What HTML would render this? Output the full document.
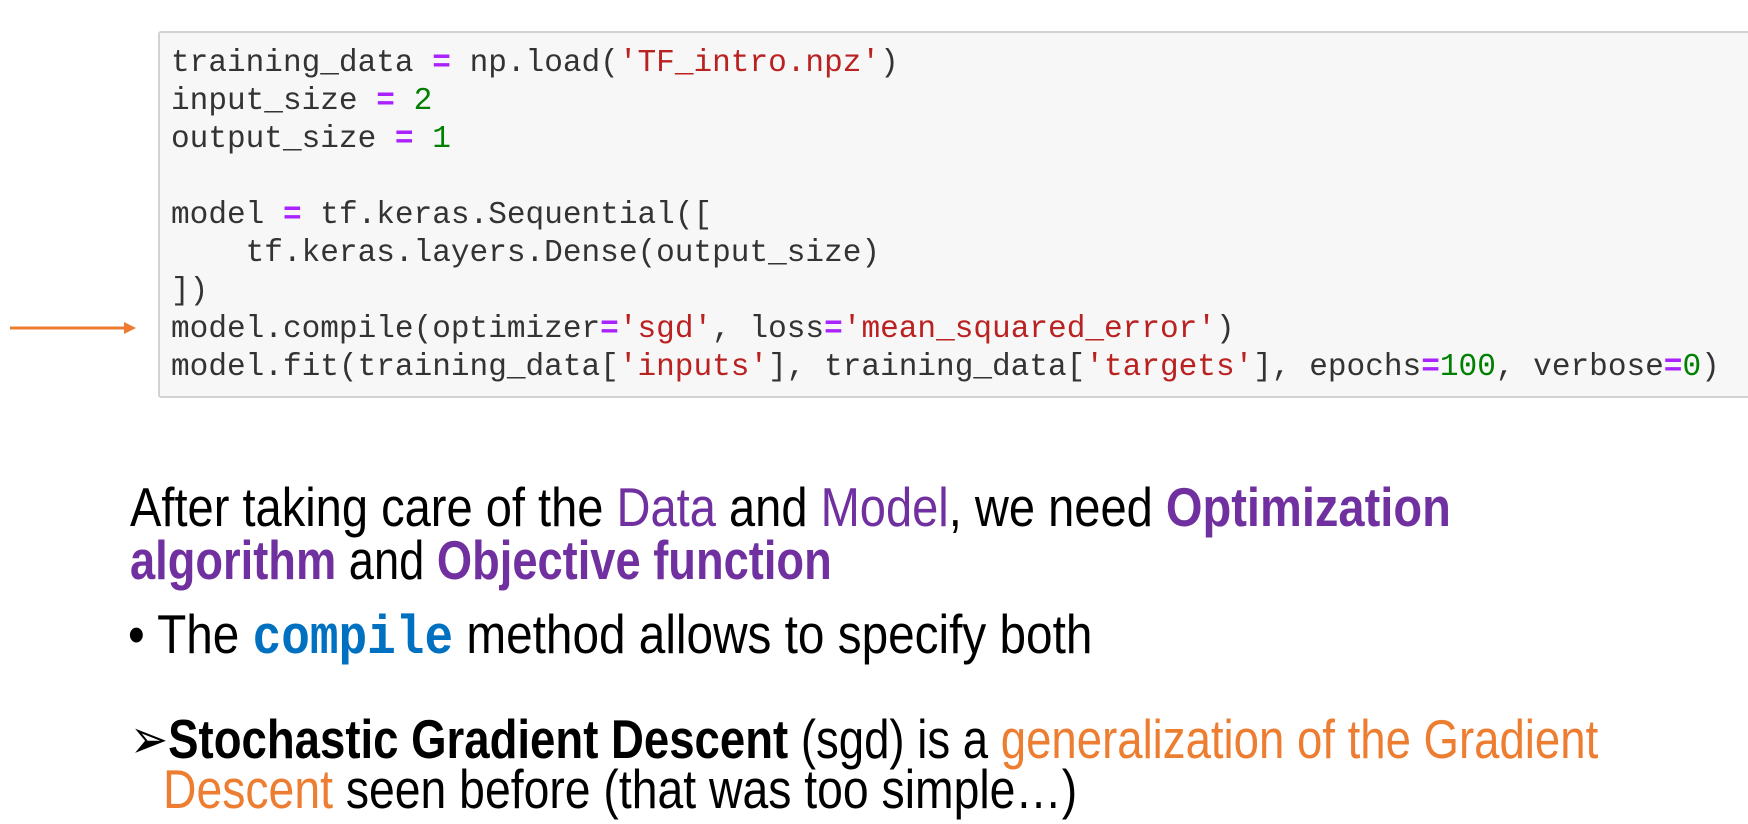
<!DOCTYPE html>
<html><head><meta charset="utf-8"><style>
html,body{margin:0;padding:0;background:#fff;width:1748px;height:824px;overflow:hidden;position:relative}
.box{position:absolute;left:158px;top:31px;width:1600px;height:367px;background:#f7f7f7;border:2px solid #d2d2d2;border-radius:3px;box-sizing:border-box}
.code{position:absolute;left:171px;top:45px;font-family:"Liberation Mono",monospace;font-size:31.1px;line-height:38px;color:#333;white-space:pre}
.o{color:#aa22ff;font-weight:bold}.s{color:#ba2121}.n{color:#008000}
.t{position:absolute;font-family:"Liberation Sans",sans-serif;font-size:55px;line-height:54px;white-space:nowrap;transform-origin:0 0;color:#000}
.p{color:#7030a0}.b{font-weight:bold}.or{color:#ed7d31}
.cm{color:#0070c0;font-family:"Liberation Mono",monospace;font-weight:bold}
</style></head><body>
<div class="box"></div>
<div class="code">training_data <span class="o">=</span> np.load(<span class="s">'TF_intro.npz'</span>)
input_size <span class="o">=</span> <span class="n">2</span>
output_size <span class="o">=</span> <span class="n">1</span>

model <span class="o">=</span> tf.keras.Sequential([
    tf.keras.layers.Dense(output_size)
])
model.compile(optimizer<span class="o">=</span><span class="s">'sgd'</span>, loss<span class="o">=</span><span class="s">'mean_squared_error'</span>)
model.fit(training_data[<span class="s">'inputs'</span>], training_data[<span class="s">'targets'</span>], epochs<span class="o">=</span><span class="n">100</span>, verbose<span class="o">=</span><span class="n">0</span>)</div>
<svg style="position:absolute;left:0;top:318px" width="140" height="20"><line x1="10" y1="10" x2="126" y2="10" stroke="#ed7d31" stroke-width="3"/><polygon points="124,4 136,10 124,16" fill="#ed7d31"/></svg>
<div class="t" data-w="1321" style="left:130px;top:480px">After taking care of the <span class="p">Data</span> and <span class="p">Model</span>, we need <span class="p b">Optimization</span></div>
<div class="t" data-w="702" style="left:130px;top:533px"><span class="p b">algorithm</span> and <span class="p b">Objective function</span></div>
<div class="t" data-w="964" style="left:128px;top:607px">• The <span class="cm">compile</span> method allows to specify both</div>
<div class="t" data-w="1468" style="left:130px;top:712px">➢<span class="b">Stochastic Gradient Descent</span> (sgd) is a <span class="or">generalization of the Gradient</span></div>
<div class="t" data-w="914" style="left:163px;top:762px"><span class="or">Descent</span> seen before (that was too simple…)</div>
<script>
document.querySelectorAll('.t').forEach(function(e){var w=+e.dataset.w;var s=w/e.scrollWidth;e.style.transform='scaleX('+s+')';});
</script>
</body></html>
